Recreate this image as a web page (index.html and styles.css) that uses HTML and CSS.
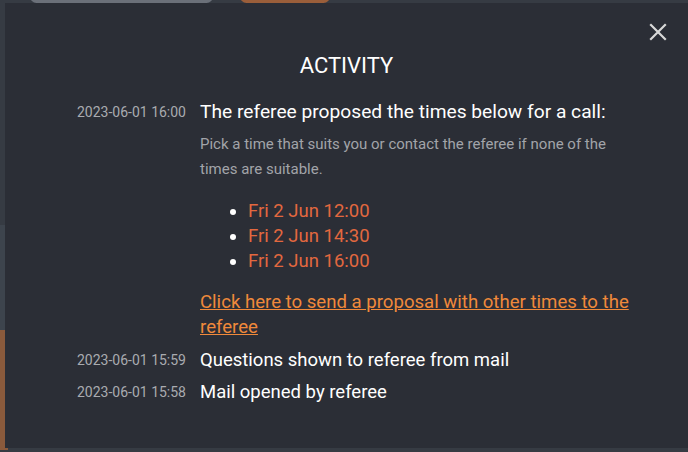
FILE: index.html
```html
<!DOCTYPE html>
<html lang="en">
<head>
  <meta charset="UTF-8">
  <meta name="viewport" content="width=device-width, initial-scale=1.0">
  <title>Activity</title>
  <link rel="stylesheet" href="styles.css">
</head>
<body>
  <!-- Page behind the modal (mostly hidden) -->
  <div class="backdrop">
    <div class="bg-pill grey"></div>
    <div class="bg-pill orange"></div>
    <div class="bg-side slate"></div>
    <div class="bg-side brown"></div>
  </div>

  <div class="modal">
    <button class="close" aria-label="Close">
      <svg width="18" height="18" viewBox="0 0 18 18">
        <path d="M2 2 L16 16 M16 2 L2 16" stroke="#d8d8d8" stroke-width="2.2" stroke-linecap="square"/>
      </svg>
    </button>

    <h2 class="title">ACTIVITY</h2>

    <div class="activity">
      <div class="row">
        <div class="date">2023-06-01 16:00</div>
        <div class="content">
          <div class="text lead">The referee proposed the times below for a call:</div>
          <p class="hint">Pick a time that suits you or contact the referee if none of the times are suitable.</p>
          <ul class="times">
            <li><a href="#">Fri 2 Jun 12:00</a></li>
            <li><a href="#">Fri 2 Jun 14:30</a></li>
            <li><a href="#">Fri 2 Jun 16:00</a></li>
          </ul>
          <a class="propose" href="#">Click here to send a proposal with other times to the referee</a>
        </div>
      </div>
      <div class="row">
        <div class="date">2023-06-01 15:59</div>
        <div class="content">
          <div class="text">Questions shown to referee from mail</div>
        </div>
      </div>
      <div class="row">
        <div class="date">2023-06-01 15:58</div>
        <div class="content">
          <div class="text">Mail opened by referee</div>
        </div>
      </div>
    </div>
  </div>
</body>
</html>
```

FILE: styles.css
```css
body {
  margin: 0;
  height: 452px;
  overflow: hidden;
  font-family: Roboto, "Liberation Sans", sans-serif;
  background-color: #363b43;
  position: relative;
}

.backdrop {
  position: absolute;
  inset: 0;
}

.bg-pill {
  position: absolute;
  top: -10px;
  height: 13px;
  border-radius: 8px;
}

.bg-pill.grey {
  left: 30px;
  width: 183px;
  background-color: #6b7079;
}

.bg-pill.orange {
  left: 240px;
  width: 90px;
  background-color: #9a5e3a;
}

.bg-side {
  position: absolute;
  left: 0;
  width: 8px;
}

.bg-side.slate {
  top: 225px;
  height: 105px;
  background-color: #3d444d;
}

.bg-side.brown {
  top: 330px;
  height: 120px;
  background-color: #8a5a3c;
}

.modal {
  position: absolute;
  top: 3px;
  left: 5px;
  right: 0;
  height: 445px;
  background-color: #2b2e36;
  color: #fff;
  box-sizing: border-box;
  padding-top: 52px;
}

.close {
  position: absolute;
  top: 20px;
  right: 21px;
  background: none;
  border: none;
  padding: 0;
  cursor: pointer;
}

.title {
  margin: 0 0 22px;
  text-align: center;
  font-size: 22px;
  font-weight: 400;
  line-height: 22px;
}

.row {
  display: grid;
  grid-template-columns: 181px 1fr;
  column-gap: 14px;
  margin-bottom: 6px;
}

.row:first-child {
  margin-bottom: 7px;
}

.date {
  text-align: right;
  font-size: 14px;
  color: #a9abb0;
  line-height: 26px;
}

.content {
  padding-right: 50px;
}

.text {
  font-size: 18.5px;
  line-height: 26px;
}

.text.lead {
  font-size: 19.2px;
}

.hint {
  margin: 7px 0 0;
  font-size: 15px;
  line-height: 25px;
  color: #a2a4a9;
}

.times {
  margin: 17px 0 16px;
  padding-left: 48px;
  font-size: 18.5px;
  line-height: 25px;
}

.times li::marker {
  color: #fff;
}

.times a {
  color: #e2683f;
  text-decoration: none;
}

.propose {
  display: block;
  font-size: 18.6px;
  line-height: 25px;
  color: #f0893b;
}
```
